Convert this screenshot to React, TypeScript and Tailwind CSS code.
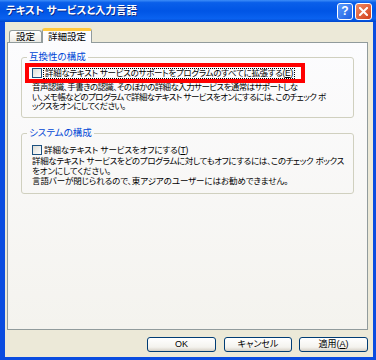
import React from "react";

// XP-style checkbox
const Check = () => (
  <span className="inline-block w-[10px] h-[10px] shrink-0 border border-[#1c5180] bg-[linear-gradient(135deg,#dcdcd5,#ffffff)]" />
);

const Btn = ({ children, w }: { children: React.ReactNode; w: string }) => (
  <button
    type="button"
    className={`${w} h-[15px] flex items-center justify-center rounded-[3px] border border-[#003c74] bg-[linear-gradient(180deg,#ffffff_0%,#f4f3ee_70%,#d6d0c5_100%)] text-[9px] leading-none text-black`}
  >
    {children}
  </button>
);

export default function App() {
  return (
    <div className="w-[376px] h-[360px] flex flex-col font-['Liberation_Sans','Noto_Sans_CJK_JP',sans-serif] [font-feature-settings:'palt'_1] [font-variant-east-asian:proportional-width] text-[8.5px] tracking-[-0.1px] text-black overflow-hidden">
      {/* TITLE BAR */}
      <div className="h-[22px] shrink-0 flex items-center pl-[6px] pr-[4px] tracking-normal bg-[linear-gradient(180deg,#3d8df8_0%,#0a5fea_12%,#0055e5_50%,#0a62f0_85%,#0046cc_100%)]">
        <span className="flex-1 text-white font-bold text-[10.5px] [text-shadow:1px_1px_0_#0a2a8c]">
          テキスト サービスと入力言語
        </span>
        <div className="flex gap-[2px]">
          <span className="w-[16px] h-[17px] flex items-center justify-center rounded-[3px] border border-white bg-[linear-gradient(135deg,#5b9bff,#1f5fe0)] text-white font-bold text-[12px] leading-none">
            ?
          </span>
          <span className="w-[17px] h-[17px] flex items-center justify-center rounded-[3px] border border-white bg-[linear-gradient(135deg,#f08a63,#d2401c)]">
            <svg width="9" height="9" viewBox="0 0 9 9">
              <path d="M1 1L8 8M8 1L1 8" stroke="#fff" strokeWidth="2" strokeLinecap="square" />
            </svg>
          </span>
        </div>
      </div>

      {/* BODY */}
      <div className="flex-1 flex flex-col bg-[#ece9d8] border-l-[5px] border-r-[3px] border-b-[3px] border-t-0 border-[#0a4ce0]">
        {/* TABS */}
        <div className="relative z-10 mt-[6px] ml-[4px] h-[14px] flex items-end text-[9.5px] tracking-normal">
          <div className="w-[33px] h-[12px] flex items-center justify-center rounded-t-[3px] border border-b-0 border-[#919b9c] bg-[linear-gradient(180deg,#ffffff,#ecebe5)] leading-none">
            設定
          </div>
          <div className="w-[50px] h-[15px] -mb-[1px] flex items-center justify-center rounded-t-[3px] border-t-[3px] border-t-[#ffc83c] border-x border-x-[#919b9c] bg-[#fcfcfe] leading-none">
            詳細設定
          </div>
        </div>

        {/* PANEL */}
        <div className="ml-[2px] mr-[5px] h-[288px] border border-[#919b9c] bg-[linear-gradient(180deg,#fcfcfe,#f4f3ee)] flex flex-col">
          {/* GROUP 1 */}
          <fieldset className="mx-[13px] mt-[9px] border border-[#d0d0bf] rounded-[3px] pl-[10px] pr-[6px] pb-[5px]">
            <legend className="-ml-[5px] px-[2px] leading-[10px] text-[#0046d5] text-[9.5px] tracking-normal">互換性の構成</legend>
            <div className="relative mt-[5px] h-[12px] flex items-center gap-[1px]">
              <Check />
              <span className="border border-dotted border-black px-[1px] leading-[9px] whitespace-nowrap tracking-[-0.3px]">
                詳細なテキスト サービスのサポートをプログラムのすべてに拡張する(<span className="underline">E</span>)
              </span>
              <span className="absolute z-10 left-[-7px] top-[-4px] w-[280px] h-[20px] border-4 border-[#ff0000] pointer-events-none" />
            </div>
            <p className="mt-[4px] leading-[9.7px] whitespace-nowrap tracking-[-0.6px]">
              <span className="block">音声認識、手書きの認識、そのほかの詳細な入力サービスを通常はサポートしな</span>
              <span className="block">い、メモ帳などのプログラムで詳細なテキスト サービスをオンにするには、このチェック ボ</span>
              <span className="block">ックスをオンにしてください。</span>
            </p>
          </fieldset>

          {/* GROUP 2 */}
          <fieldset className="mx-[13px] mt-[10px] border border-[#d0d0bf] rounded-[3px] pl-[10px] pr-[6px] pb-[7px]">
            <legend className="-ml-[5px] px-[2px] leading-[10px] text-[#0046d5] text-[9.5px] tracking-normal">システムの構成</legend>
            <div className="mt-[6px] h-[12px] flex items-center gap-[2px]">
              <Check />
              <span className="leading-[9px] whitespace-nowrap">
                詳細なテキスト サービスをオフにする(<span className="underline">T</span>)
              </span>
            </div>
            <p className="mt-[1px] leading-[9.7px] whitespace-nowrap">
              <span className="block tracking-[-0.35px]">詳細なテキスト サービスをどのプログラムに対してもオフにするには、このチェック ボックス</span>
              <span className="block">をオンにしてください。</span>
              <span className="block">言語バーが閉じられるので、東アジアのユーザーにはお勧めできません。</span>
            </p>
          </fieldset>
        </div>

        {/* BUTTONS */}
        <div className="mt-[7px] mr-[5px] flex justify-end tracking-normal">
          <Btn w="w-[69px]">OK</Btn>
          <div className="w-[8px]" />
          <Btn w="w-[68px]">キャンセル</Btn>
          <div className="w-[7px]" />
          <Btn w="w-[69px]">
            適用(<span className="underline">A</span>)
          </Btn>
        </div>
      </div>
    </div>
  );
}
